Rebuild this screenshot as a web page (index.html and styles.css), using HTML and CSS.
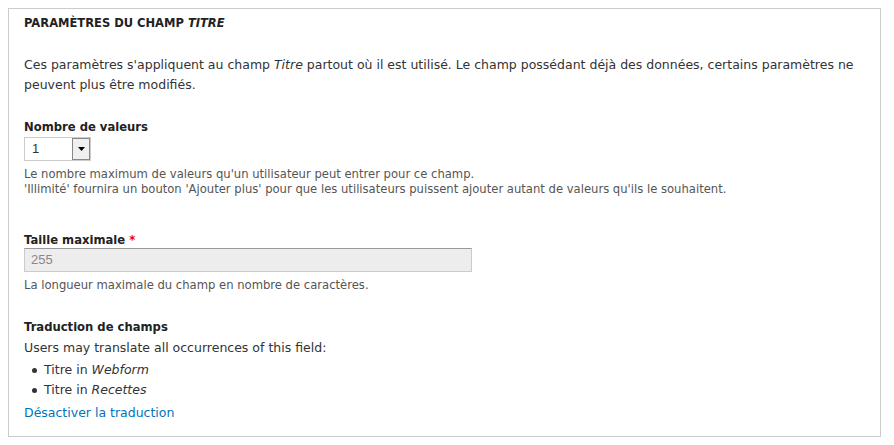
FILE: index.html
```html
<!DOCTYPE html>
<html lang="fr">
<head>
<meta charset="utf-8">
<title>Paramètres du champ</title>
<link rel="stylesheet" href="styles.css">
</head>
<body>
<div class="panel">
  <div class="legend">PARAMÈTRES DU CHAMP <em>TITRE</em></div>
  <p class="intro">Ces paramètres s'appliquent au champ <em>Titre</em> partout où il est utilisé. Le champ possédant déjà des données, certains paramètres ne peuvent plus être modifiés.</p>

  <div class="item item-card">
    <label class="label">Nombre de valeurs</label>
    <div class="select">
      <span class="select-value">1</span>
      <span class="select-btn"><svg width="7" height="4" viewBox="0 0 7 4"><path d="M0 0h7L3.5 4z" fill="#000"/></svg></span>
    </div>
    <div class="desc">Le nombre maximum de valeurs qu'un utilisateur peut entrer pour ce champ.<br>'Illimité' fournira un bouton 'Ajouter plus' pour que les utilisateurs puissent ajouter autant de valeurs qu'ils le souhaitent.</div>
  </div>

  <div class="item item-size">
    <label class="label">Taille maximale <span class="req">*</span></label>
    <div class="input">255</div>
    <div class="desc">La longueur maximale du champ en nombre de caractères.</div>
  </div>

  <div class="item item-trans">
    <div class="label">Traduction de champs</div>
    <div class="text">Users may translate all occurrences of this field:</div>
    <ul class="list">
      <li>Titre in <em>Webform</em></li>
      <li>Titre in <em>Recettes</em></li>
    </ul>
    <a class="link" href="#">Désactiver la traduction</a>
  </div>
</div>
</body>
</html>
```

FILE: styles.css
```css
html, body {
  margin: 0;
  background: #fff;
}
body {
  padding: 8px 13px 9px 8px;
  font-family: "DejaVu Sans", Verdana, sans-serif;
  font-size: 12.5px;
  color: #333;
}
.panel {
  border: 1px solid #ccc;
  padding: 6px 15px 13px;
  height: 429px;
  box-sizing: border-box;
}
.legend {
  font-weight: bold;
  font-size: 11.5px;
  line-height: 16px;
  color: #222;
}
.intro {
  margin: 24px 0 0;
  line-height: 20px;
}
.item-card { margin-top: 23px; }
.label {
  display: block;
  font-weight: bold;
  font-size: 11.6px;
  line-height: 18px;
  color: #222;
}
.req { color: #e00; }
.select {
  display: flex;
  width: 67px;
  height: 24px;
  box-sizing: border-box;
  border: 1px solid #ccc;
  margin-top: 1px;
  font-family: "Liberation Sans", Arial, sans-serif;
  font-size: 13px;
}
.select-value {
  flex: 1;
  padding-left: 7px;
  line-height: 22px;
}
.select-btn {
  width: 16px;
  border: 1px solid #888;
  background: #f0f0f0;
  display: flex;
  align-items: center;
  justify-content: center;
}
.desc {
  font-size: 11.6px;
  line-height: 15px;
  color: #555;
  margin-top: 6px;
}
.item-size { margin-top: 34px; }
.input {
  width: 448px;
  height: 24px;
  box-sizing: border-box;
  border: 1px solid #ccc;
  border-top-color: #999;
  background: #ededed;
  color: #888;
  font-family: "Liberation Sans", Arial, sans-serif;
  font-size: 13px;
  line-height: 22px;
  padding-left: 6px;
  margin-top: -1px;
}
.item-trans { margin-top: 25px; }
.text { line-height: 20px; margin-top: 2px; }
.list {
  margin: 2px 0 0;
  padding-left: 20px;
  line-height: 20px;
  list-style: none;
}
.list li { position: relative; }
.list li::before {
  content: "";
  position: absolute;
  left: -12px;
  top: 8px;
  width: 5px;
  height: 5px;
  border-radius: 50%;
  background: #333;
}
.link {
  display: block;
  margin-top: 3px;
  line-height: 20px;
  color: #0074bd;
  text-decoration: none;
}
```
